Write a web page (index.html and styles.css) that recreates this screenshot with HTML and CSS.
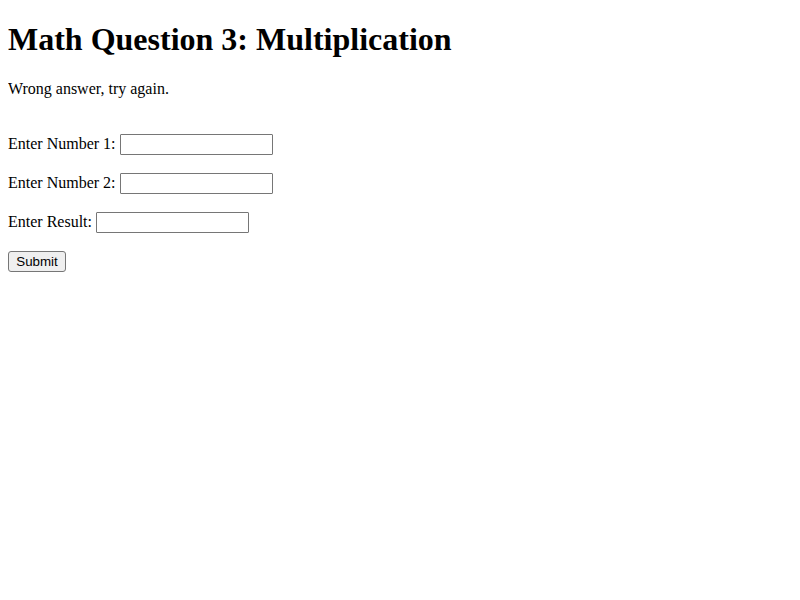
FILE: index.html
```html
<!DOCTYPE html>
<html lang="en">
<head>
<meta charset="utf-8">
<title>Math Question 3: Multiplication</title>
<link rel="stylesheet" href="styles.css">
</head>
<body>
<h1>Math Question 3: Multiplication</h1>
<p class="message">Wrong answer, try again.</p>
<form class="question">
  <div class="field">
    <label for="num1">Enter Number 1:</label>
    <input type="text" id="num1" name="num1">
  </div>
  <div class="field">
    <label for="num2">Enter Number 2:</label>
    <input type="text" id="num2" name="num2">
  </div>
  <div class="field">
    <label for="result">Enter Result:</label>
    <input type="text" id="result" name="result">
  </div>
  <button class="submit" type="submit">Submit</button>
</form>
</body>
</html>
```
FILE: styles.css
```css
body {
  display: flow-root;
  margin: 8px;
  background: #fff;
  color: #000;
  font-family: "Liberation Serif", "Times New Roman", serif;
  font-size: 16px;
  line-height: 18px;
}

h1 {
  margin: 13px 0 22px;
  font-size: 32px;
  line-height: 37px;
}

.message {
  margin: 0 0 36px;
}

.question {
  display: flex;
  flex-direction: column;
  align-items: flex-start;
  gap: 18px;
}

.field {
  display: flex;
  align-items: flex-start;
  gap: 4px;
}

.field label {
  line-height: 20px;
}

input,
.submit {
  box-sizing: border-box;
  height: 21px;
  margin: 0;
  border: 1px solid #767676;
  font-family: "Liberation Sans", Arial, sans-serif;
  font-size: smaller;
}

input {
  width: 153px;
  padding: 1px 2px;
  border-radius: 1px;
  background: #fff;
}

.submit {
  min-width: 58px;
  padding: 0 7px;
  border-radius: 3px;
  background: #efefef;
  color: #000;
}
```
